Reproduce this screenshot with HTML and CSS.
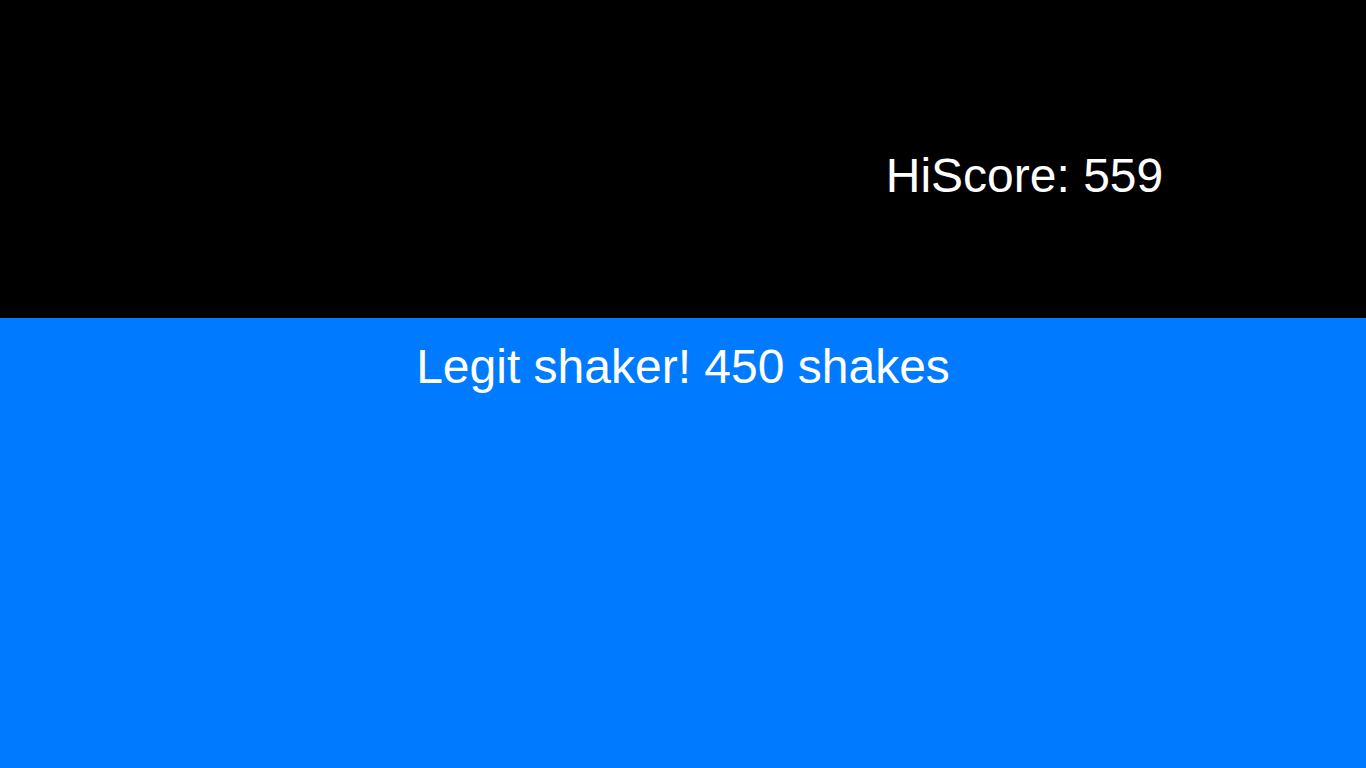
FILE: index.html
```html
<!DOCTYPE html>
<html lang="en">
<head>
<meta charset="utf-8">
<title>Shaker</title>
<link rel="stylesheet" href="styles.css">
</head>
<body>
<div class="page">
  <header class="top">
    <div class="half"></div>
    <div class="half score-col">
      <div class="hiscore">HiScore: 559</div>
    </div>
  </header>
  <main class="bottom">
    <div class="result">Legit shaker! 450 shakes</div>
  </main>
</div>
</body>
</html>
```

FILE: styles.css
```css
html, body {
  margin: 0;
  padding: 0;
}
html {
  overflow: scroll;
}
::-webkit-scrollbar {
  width: 15px;
  height: 15px;
  background: #f0f0f0;
}
::-webkit-scrollbar-track {
  background: #f0f0f0;
}
::-webkit-scrollbar-thumb {
  background: #c1c1c1;
  border: 2px solid #f0f0f0;
  box-shadow: inset 0 0 0 1px #a8a8a8;
}
::-webkit-scrollbar-button:single-button {
  display: block;
  width: 15px;
  height: 14px;
  background-color: #f0f0f0;
}
::-webkit-scrollbar-corner {
  background: #dcdcdc;
}
body {
  font-family: "Liberation Sans", Arial, sans-serif;
  color: #fff;
}
.page {
  width: 100vw;
}
.top {
  display: flex;
  height: 318px;
  background: #000;
}
.half {
  flex: 1 1 50%;
}
.score-col {
  text-align: center;
  padding-top: 149px;
  box-sizing: border-box;
}
.hiscore {
  font-size: 48px;
  line-height: 54px;
}
.bottom {
  background: #007bff;
  height: 455px;
  padding-top: 22px;
  box-sizing: border-box;
  text-align: center;
}
.result {
  font-size: 48px;
  line-height: 54px;
}
```
